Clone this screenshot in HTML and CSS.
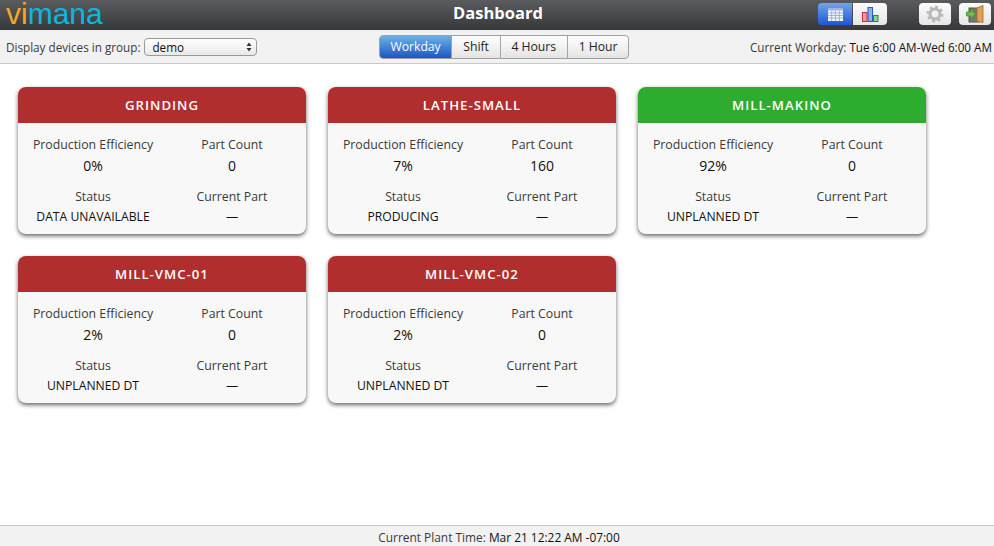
FILE: index.html
```html
<!DOCTYPE html>
<html>
  <head>
    <title>Dashboard</title>
    <link rel="stylesheet" href="styles.css">
  </head>
  <body>
    <div class="topbar">
      <div class="logo"><span class="logo-vi">vi</span>mana</div>
      <div class="page-title">Dashboard</div>
      <div class="top-actions">
        <div class="view-switch">
          <span class="top-btn top-btn-active">
            <svg width="15" height="13" viewBox="0 0 15 13">
              <rect x="0" y="0" width="15" height="13" fill="#f4f6fc"/>
              <rect x="0" y="0" width="15" height="2.500" fill="#9db4e4"/>
              <path d="M0 5h15M0 7.500h15M0 10h15M3.700 2.500v10.500M7.500 2.500v10.500M11.300 2.500v10.500" stroke="#8ba3d6" stroke-width="0.8" fill="none"/>
            </svg>
          </span>
          <span class="top-btn top-btn-right">
            <svg width="17" height="15" viewBox="0 0 17 15">
              <rect x="0.500" y="5.500" width="4.500" height="9" fill="#f29aa6" stroke="#c8303f"/>
              <rect x="6" y="0.500" width="4.500" height="14" fill="#8fb0e6" stroke="#2a5db0"/>
              <rect x="11.500" y="8.500" width="4.500" height="6" fill="#8fd09a" stroke="#2a8a3e"/>
            </svg>
          </span>
        </div>
        <span class="top-btn top-btn-single">
          <svg width="18" height="18" viewBox="0 0 18 18">
            <circle cx="9" cy="9" r="5" fill="none" stroke="#b8b8b8" stroke-width="3"/>
            <circle cx="9" cy="9" r="7.200" fill="none" stroke="#b8b8b8" stroke-width="2.400" stroke-dasharray="2.800 2.850"/>
          </svg>
        </span>
        <span class="top-btn top-btn-single">
          <svg width="18" height="18" viewBox="0 0 18 18">
            <rect x="3" y="3" width="10" height="14" fill="#77796f" stroke="#55574f"/>
            <path d="M11 3l6-2.500v17l-6-1z" fill="#e0a055" stroke="#a5692a" stroke-width="0.800"/>
            <path d="M0.500 7h4v-3l5 5-5 5v-3h-4z" fill="#6fbf4e" stroke="#3c8a2a" stroke-width="0.800"/>
          </svg>
        </span>
      </div>
    </div>

    <div class="toolbar">
      <div class="group-picker">
        <label for="group">Display devices in group:</label>
        <div class="fake-select" id="group">
          <span>demo</span>
          <svg width="6" height="10" viewBox="0 0 6 10"><path d="M3 0.500l2.500 3.500h-5zM3 9.500l-2.500-3.500h5z" fill="#333"/></svg>
        </div>
      </div>
      <div class="segments">
        <span class="segment segment-active">Workday</span>
        <span class="segment">Shift</span>
        <span class="segment">4 Hours</span>
        <span class="segment">1 Hour</span>
      </div>
      <div class="workday">Current Workday: <b>Tue 6:00 AM-Wed 6:00 AM</b></div>
    </div>

    <div class="cards">
      <div class="card">
        <div class="card-head">GRINDING</div>
        <div class="card-body">
          <div class="cell"><div class="cell-label">Production Efficiency</div><div class="cell-big">0%</div></div>
          <div class="cell"><div class="cell-label">Part Count</div><div class="cell-big">0</div></div>
          <div class="cell"><div class="cell-label">Status</div><div class="cell-small">DATA UNAVAILABLE</div></div>
          <div class="cell"><div class="cell-label">Current Part</div><div class="cell-small">—</div></div>
        </div>
      </div>
      <div class="card">
        <div class="card-head">LATHE-SMALL</div>
        <div class="card-body">
          <div class="cell"><div class="cell-label">Production Efficiency</div><div class="cell-big">7%</div></div>
          <div class="cell"><div class="cell-label">Part Count</div><div class="cell-big">160</div></div>
          <div class="cell"><div class="cell-label">Status</div><div class="cell-small">PRODUCING</div></div>
          <div class="cell"><div class="cell-label">Current Part</div><div class="cell-small">—</div></div>
        </div>
      </div>
      <div class="card">
        <div class="card-head card-head-green">MILL-MAKINO</div>
        <div class="card-body">
          <div class="cell"><div class="cell-label">Production Efficiency</div><div class="cell-big">92%</div></div>
          <div class="cell"><div class="cell-label">Part Count</div><div class="cell-big">0</div></div>
          <div class="cell"><div class="cell-label">Status</div><div class="cell-small">UNPLANNED DT</div></div>
          <div class="cell"><div class="cell-label">Current Part</div><div class="cell-small">—</div></div>
        </div>
      </div>
      <div class="card">
        <div class="card-head">MILL-VMC-01</div>
        <div class="card-body">
          <div class="cell"><div class="cell-label">Production Efficiency</div><div class="cell-big">2%</div></div>
          <div class="cell"><div class="cell-label">Part Count</div><div class="cell-big">0</div></div>
          <div class="cell"><div class="cell-label">Status</div><div class="cell-small">UNPLANNED DT</div></div>
          <div class="cell"><div class="cell-label">Current Part</div><div class="cell-small">—</div></div>
        </div>
      </div>
      <div class="card">
        <div class="card-head">MILL-VMC-02</div>
        <div class="card-body">
          <div class="cell"><div class="cell-label">Production Efficiency</div><div class="cell-big">2%</div></div>
          <div class="cell"><div class="cell-label">Part Count</div><div class="cell-big">0</div></div>
          <div class="cell"><div class="cell-label">Status</div><div class="cell-small">UNPLANNED DT</div></div>
          <div class="cell"><div class="cell-label">Current Part</div><div class="cell-small">—</div></div>
        </div>
      </div>
    </div>

    <div class="footer">Current Plant Time: <b>Mar 21 12:22 AM -07:00</b></div>
  </body>
</html>
```

FILE: styles.css
```css
html,
body {
  height: 100%;
}

body {
  margin: 0;
  display: flex;
  flex-direction: column;
  overflow: hidden;
  background-color: #fff;
  color: #3a3a3a;
  font-family: "Open Sans", "DejaVu Sans", sans-serif;
  font-size: 11.7px;
  font-variant-ligatures: none;
}

b {
  font-weight: normal;
  color: #111;
}

.topbar {
  flex: none;
  height: 30px;
  display: grid;
  grid-template-columns: 1fr auto 1fr;
  align-items: center;
  background: linear-gradient(#5a5b5e, #37383a);
}

.logo {
  height: 30px;
  padding-left: 6px;
  color: #0cb8e0;
  font-family: "Liberation Sans", sans-serif;
  font-size: 30px;
  line-height: 28px;
}

.logo-vi {
  color: #f5a62c;
}

.page-title {
  color: #fff;
  font-family: "Open Sans", sans-serif;
  font-size: 16.5px;
  font-weight: 700;
  position: relative;
  top: -3px;
  left: 1px;
}

.top-actions {
  display: flex;
  justify-content: flex-end;
  gap: 8px;
  padding-right: 3px;
  padding-bottom: 2px;
}

.view-switch {
  display: flex;
  gap: 1px;
  margin-right: 24px;
}

.top-btn {
  height: 22px;
  display: flex;
  align-items: center;
  justify-content: center;
  background: linear-gradient(#fbfbfb, #e6e6e6);
}

.top-btn-active {
  width: 34px;
  background: linear-gradient(#6fa4ec, #1f57d6);
  border-radius: 4px 0 0 4px;
}

.top-btn-right {
  width: 34px;
  border-radius: 0 4px 4px 0;
}

.top-btn-single {
  width: 32px;
  border-radius: 4px;
}

.toolbar {
  flex: none;
  height: 33px;
  display: grid;
  grid-template-columns: 1fr auto 1fr;
  align-items: center;
  padding: 0 2px 0 6px;
  background-color: #f2f2f2;
  border-bottom: 1px solid #c9c9c9;
}

.group-picker {
  display: flex;
  align-items: center;
  gap: 4px;
}

.fake-select {
  width: 100px;
  height: 16px;
  display: flex;
  align-items: center;
  justify-content: space-between;
  padding: 0 4px 0 7px;
  background: linear-gradient(#fff, #e9e9e9);
  border: 1px solid #9a9a9a;
  border-radius: 4px;
  color: #111;
}

.segments {
  display: flex;
  height: 22px;
  margin-left: 10px;
  border: 1px solid #9f9f9f;
  border-radius: 4px;
  overflow: hidden;
  background: linear-gradient(#fff, #e4e4e4);
  color: #222;
  font-size: 12.2px;
}

.segment {
  display: flex;
  align-items: center;
  padding: 0 10.75px;
  border-left: 1px solid #a5a5a5;
}

.segment:first-child {
  border-left: none;
}

.segment-active {
  background: linear-gradient(#6db1e6, #1c55c4);
  color: #fff;
}

.workday {
  text-align: right;
  white-space: nowrap;
}

.cards {
  flex: 1;
  display: flex;
  flex-wrap: wrap;
  align-content: flex-start;
  gap: 22px;
  padding: 23px 18px;
}

.card {
  width: 288px;
  height: 147px;
  border-radius: 8px;
  overflow: hidden;
  background-color: #f8f8f8;
  box-shadow: 0 2px 4px rgba(0, 0, 0, 0.6);
}

.card-head {
  height: 36px;
  line-height: 36px;
  text-align: center;
  background-color: #b02e2e;
  color: #fff;
  font-size: 13.2px;
  font-weight: 600;
  letter-spacing: 1px;
}

.card-head-green {
  background-color: #2dac2f;
}

.card-body {
  display: grid;
  grid-template-columns: 150px 128px;
  grid-auto-rows: 52px;
  padding-top: 13px;
}

.cell {
  text-align: center;
}

.cell-label {
  height: 17px;
  line-height: 17px;
  font-size: 12.3px;
}

.cell-big {
  height: 25px;
  line-height: 25px;
  color: #111;
  font-size: 14px;
}

.cell-small {
  height: 21px;
  line-height: 23px;
  color: #111;
  font-size: 12.2px;
}

.footer {
  flex: none;
  height: 20px;
  padding-left: 4px;
  line-height: 23px;
  text-align: center;
  background-color: #f2f2f2;
  border-top: 1px solid #c9c9c9;
  font-size: 11.9px;
}
```
